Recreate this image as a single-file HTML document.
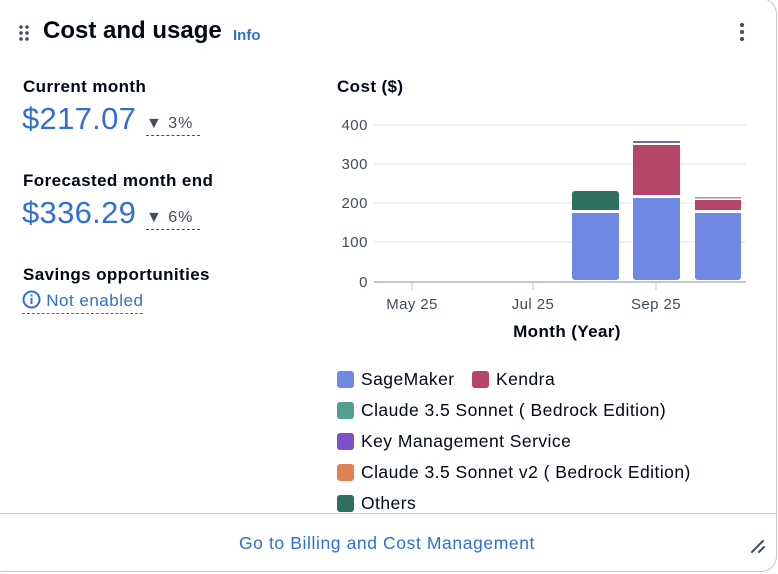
<!DOCTYPE html>
<html><head><style>
body{margin:0;width:778px;height:573px;background:#fff;font-family:"Liberation Sans",sans-serif;overflow:hidden}
.t{position:absolute;white-space:nowrap}
.lbl{font-weight:bold;font-size:17px;color:#000716;letter-spacing:0.4px}
.big{font-size:31px;color:#2f6fd6;letter-spacing:0.3px}
.pct{font-size:16px;color:#414d5c;border-bottom:1px dashed #414d5c;padding-bottom:2px;letter-spacing:1px;width:54px}
.leg{font-size:17.5px;color:#000716;letter-spacing:0.45px}
.sw{position:absolute;width:17px;height:17px;border-radius:3px}
</style></head><body>
<svg class="t" style="left:18px;top:24px" width="12" height="18"><g fill="#414d5c"><circle cx="3" cy="3" r="1.8"/><circle cx="9" cy="3" r="1.8"/><circle cx="3" cy="9" r="1.8"/><circle cx="9" cy="9" r="1.8"/><circle cx="3" cy="15" r="1.8"/><circle cx="9" cy="15" r="1.8"/></g></svg>
<div class="t" style="left:43px;top:17px;font-size:24px;font-weight:bold;color:#000716">Cost and usage</div>
<div class="t" style="left:233px;top:27px;font-size:15px;font-weight:bold;color:#2f6fd6">Info</div>
<svg class="t" style="left:739px;top:22px" width="6" height="20"><g fill="#414d5c"><circle cx="3" cy="3" r="2"/><circle cx="3" cy="10" r="2"/><circle cx="3" cy="17" r="2"/></g></svg>

<div class="t lbl" style="left:23px;top:77px">Current month</div>
<div class="t big" style="left:22px;top:101px">$217.07</div>
<div class="t pct" style="left:146px;top:115px">&#9660; 3%</div>
<div class="t lbl" style="left:23px;top:171px">Forecasted month end</div>
<div class="t big" style="left:22px;top:195px">$336.29</div>
<div class="t pct" style="left:146px;top:209px">&#9660; 6%</div>
<div class="t lbl" style="left:23px;top:265px">Savings opportunities</div>
<div class="t" style="left:22px;top:290px;font-size:17px;letter-spacing:0.5px;color:#2f6fd6;border-bottom:1px dashed #2f6fd6;padding-bottom:2px"><svg width="19" height="19" style="vertical-align:-3px"><circle cx="9.5" cy="9.5" r="8" fill="none" stroke="#2f6fd6" stroke-width="2"/><rect x="8.5" y="8" width="2" height="6" fill="#2f6fd6"/><rect x="8.5" y="4.5" width="2" height="2" fill="#2f6fd6"/></svg> Not enabled</div>

<div class="t lbl" style="left:337px;top:77px">Cost ($)</div>
<svg class="t" style="left:330px;top:110px" width="430" height="240" font-family="Liberation Sans" font-size="15" fill="#414d5c">
<g stroke="#e0e3e8" stroke-width="1"><line x1="44" y1="15" x2="416" y2="15"/><line x1="44" y1="54" x2="416" y2="54"/><line x1="44" y1="93" x2="416" y2="93"/><line x1="44" y1="132" x2="416" y2="132"/></g>
<line x1="44" y1="172" x2="416" y2="172" stroke="#c6c6cd" stroke-width="2"/>
<g text-anchor="end" letter-spacing="0.5"><text x="38" y="20">400</text><text x="38" y="59">300</text><text x="38" y="98">200</text><text x="38" y="137">100</text><text x="38" y="177">0</text></g>
<g stroke="#c6c6cd"><line x1="82" y1="173" x2="82" y2="180"/><line x1="203" y1="173" x2="203" y2="180"/><line x1="326" y1="173" x2="326" y2="180"/></g>
<g text-anchor="middle" letter-spacing="0.4"><text x="82" y="199">May 25</text><text x="203" y="199">Jul 25</text><text x="326" y="199">Sep 25</text>
<text x="237" y="227" font-weight="bold" font-size="17" fill="#000716">Month (Year)</text></g>
<path d="M242 103h47v64a3 3 0 0 1-3 3h-41a3 3 0 0 1-3-3z" fill="#6f88e2"/>
<path d="M245 81h41a3 3 0 0 1 3 3v16h-47v-16a3 3 0 0 1 3-3z" fill="#2f6f5f"/>
<path d="M303 88h47v79a3 3 0 0 1-3 3h-41a3 3 0 0 1-3-3z" fill="#6f88e2"/>
<rect x="303" y="35" width="47" height="50" fill="#b64668"/>
<rect x="303" y="31" width="47" height="2" fill="#6b6f9a"/>
<path d="M365 103h46v64a3 3 0 0 1-3 3h-40a3 3 0 0 1-3-3z" fill="#6f88e2"/>
<rect x="365" y="90" width="46" height="10" fill="#b64668"/>
<rect x="365" y="87" width="46" height="1.5" fill="#999"/>
</svg>

<div class="sw" style="left:337px;top:371px;background:#6f88e2"></div><div class="t leg" style="left:361px;top:369px">SageMaker</div>
<div class="sw" style="left:472px;top:371px;background:#b64668"></div><div class="t leg" style="left:496px;top:369px">Kendra</div>
<div class="sw" style="left:337px;top:402px;background:#529e8f"></div><div class="t leg" style="left:361px;top:400px">Claude 3.5 Sonnet ( Bedrock Edition)</div>
<div class="sw" style="left:337px;top:433px;background:#7d4fc8"></div><div class="t leg" style="left:361px;top:431px">Key Management Service</div>
<div class="sw" style="left:337px;top:464px;background:#df8150"></div><div class="t leg" style="left:361px;top:462px">Claude 3.5 Sonnet v2 ( Bedrock Edition)</div>
<div class="sw" style="left:337px;top:495px;background:#2f6f5f"></div><div class="t leg" style="left:361px;top:493px">Others</div>
<div class="t" style="left:0;top:513px;width:776px;height:60px;background:#fff;border-top:1px solid #c6c6cd"></div>
<div class="t" style="left:0;top:533px;width:774px;text-align:center;font-size:17.5px;letter-spacing:0.6px;color:#2f6fd6">Go to Billing and Cost Management</div>
<svg class="t" style="left:750px;top:538px" width="16" height="16"><g stroke="#414d5c" stroke-width="2" stroke-linecap="round"><line x1="2" y1="14" x2="13" y2="3"/><line x1="9" y1="14" x2="14" y2="9"/></g></svg>
<div class="t" style="left:-12px;top:-2px;width:789px;height:574px;border:1px solid #c6c6cd;border-radius:16px;box-sizing:border-box;pointer-events:none"></div>
</body></html>
